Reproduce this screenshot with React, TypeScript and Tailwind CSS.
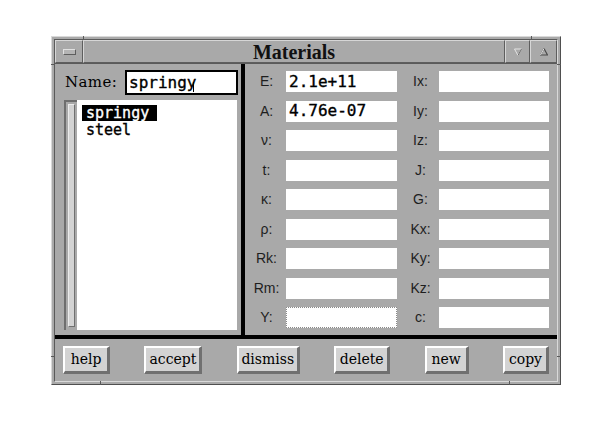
import { ReactNode } from "react";

const leftLabels = ["E:", "A:", "ν:", "t:", "κ:", "ρ:", "Rk:", "Rm:", "Y:"];
const leftValues = ["2.1e+11", "4.76e-07", "", "", "", "", "", "", ""];
const rightLabels = ["Ix:", "Iy:", "Iz:", "J:", "G:", "Kx:", "Ky:", "Kz:", "c:"];

const buttons = [
  { label: "help", w: "w-[47px]" },
  { label: "accept", w: "w-[58px]" },
  { label: "dismiss", w: "w-[63px]" },
  { label: "delete", w: "w-[56px]" },
  { label: "new", w: "w-[44px]" },
  { label: "copy", w: "w-[46px]" },
];

const mono = "font-['DejaVu_Sans_Mono',monospace] [-webkit-text-stroke:0.35px_currentColor]";
const serif = "font-['DejaVu_Serif',serif]";
const sans = "font-['Liberation_Sans',Arial,sans-serif]";

const Bevel = ({ className, children }: { className: string; children?: ReactNode }) => (
  <div
    className={`flex items-center justify-center border border-t-[#d6d6d6] border-l-[#d6d6d6] border-b-[#5e5e5e] border-r-[#5e5e5e] ${className}`}
  >
    {children}
  </div>
);

const Field = ({ value, dotted }: { value: string; dotted?: boolean }) => (
  <div
    className={`flex h-[21px] items-center bg-white pl-[3px] text-[16px] text-black ${mono} ${
      dotted ? "border border-dotted border-[#8a8a8a]" : ""
    }`}
  >
    {value}
  </div>
);

export default function App() {
  return (
    <div className="min-h-screen bg-white pl-[51px] pt-[36px]">
      {/* window frame */}
      <div className="relative h-[349px] w-[510px] border border-t-[#d9d9d9] border-l-[#d9d9d9] border-b-[#4f4f4f] border-r-[#4f4f4f] bg-[#a9a9a9] p-[2px]">
        {/* resize handle notches */}
        <div className="absolute left-[31px] top-[-1px] h-[4px] w-[1px] bg-[#5a5a5a]" />
        <div className="absolute right-[28px] top-[-1px] h-[4px] w-[1px] bg-[#5a5a5a]" />
        <div className="absolute left-[-1px] top-[27px] h-[1px] w-[4px] bg-[#5a5a5a]" />
        <div className="absolute right-[-1px] top-[27px] h-[1px] w-[4px] bg-[#5a5a5a]" />
        <div className="absolute bottom-[27px] left-[-1px] h-[1px] w-[4px] bg-[#5a5a5a]" />
        <div className="absolute bottom-[27px] right-[-1px] h-[1px] w-[4px] bg-[#5a5a5a]" />
        <div className="absolute bottom-[-1px] left-[48px] h-[4px] w-[1px] bg-[#5a5a5a]" />
        <div className="absolute bottom-[-1px] right-[50px] h-[4px] w-[1px] bg-[#5a5a5a]" />

        <div className="flex h-full flex-col border border-t-[#5a5a5a] border-l-[#5a5a5a] border-b-[#d9d9d9] border-r-[#d9d9d9]">
          {/* title bar */}
          <div className="flex h-[24px] border-b border-[#5a5a5a]">
            <Bevel className="w-[28px]">
              <div className="h-[6px] w-[13px] border border-t-[#e0e0e0] border-l-[#e0e0e0] border-b-[#5e5e5e] border-r-[#5e5e5e] bg-[#b4b4b4]" />
            </Bevel>
            <Bevel className="flex-1">
              <span className="font-['Liberation_Serif',serif] text-[20px] font-bold leading-none text-[#111]">
                Materials
              </span>
            </Bevel>
            <Bevel className="w-[25px]">
              <svg width="8" height="8" viewBox="0 0 8 8">
                <path d="M0.5 1 L7.5 1 L4 7.5 Z" fill="none" stroke="#e4e4e4" strokeWidth="1" />
                <path d="M7.5 1 L4 7.5" stroke="#6a6a6a" strokeWidth="1" />
              </svg>
            </Bevel>
            <Bevel className="w-[27px]">
              <svg width="8" height="8" viewBox="0 0 8 8">
                <path d="M4 0.5 L7.5 7 L0.5 7 Z" fill="none" stroke="#4a4a4a" strokeWidth="1.2" />
                <path d="M4 0.5 L0.5 7" stroke="#e4e4e4" strokeWidth="1" />
              </svg>
            </Bevel>
          </div>

          {/* body */}
          <div className="flex h-[271px]">
            {/* left panel */}
            <div className="flex w-[186px] flex-col pt-[6px]">
              <div className="flex h-[25px] items-center pl-[10px]">
                <div className={`w-[60px] text-[15px] tracking-[0.4px] text-black ${serif}`}>Name:</div>
                <div
                  className={`flex h-[25px] w-[113px] items-center border-2 border-black bg-white pl-[2px] text-[16px] text-black ${mono}`}
                >
                  springy
                  <span className="ml-[-3px] mt-[8px] h-[10px] w-[1px] bg-black" />
                </div>
              </div>
              <div className="ml-[9px] mt-[5px] flex h-[230px] w-[173px]">
                <div className="flex w-[13px] flex-col border-l-2 border-t-2 border-[#6e6e6e] bg-[#a9a9a9] p-[2px] pb-[3px]">
                  <div className="flex-1 border border-t-[#ececec] border-l-[#ececec] border-b-[#707070] border-r-[#707070] bg-[#d3d3d3]" />
                </div>
                <div className={`flex-1 bg-white pl-[5px] pt-[5px] text-[15px] leading-[16px] text-black ${mono}`}>
                  <div className="w-[75px] bg-black pl-[4px] text-white">springy</div>
                  <div className="mt-[1px] pl-[4px]">steel</div>
                </div>
              </div>
            </div>

            <div className="w-[4px] bg-black" />

            {/* right panel */}
            <div className="flex flex-1 flex-col gap-[8.5px] pl-[2px] pt-[7px]">
              {leftLabels.map((lbl, i) => (
                <div key={lbl} className="flex h-[21px] items-center">
                  <div className={`w-[39px] text-center text-[14px] text-[#1e1e1e] ${sans}`}>{lbl}</div>
                  <div className="w-[111px]">
                    <Field value={leftValues[i]} dotted={lbl === "Y:"} />
                  </div>
                  <div className={`ml-[5px] w-[37px] text-center text-[14px] text-[#1e1e1e] ${sans}`}>
                    {rightLabels[i]}
                  </div>
                  <div className="w-[110px]">
                    <Field value="" />
                  </div>
                </div>
              ))}
            </div>
          </div>

          <div className="h-[4px] bg-black" />

          {/* button bar */}
          <div className="flex flex-1 items-start justify-between px-[8px] pt-[7px]">
            {buttons.map((b) => (
              <button
                key={b.label}
                className={`flex h-[28px] items-center justify-center border-t-2 border-l-2 border-b-[3px] border-r-[3px] border-t-white border-l-white border-b-[#707070] border-r-[#707070] bg-[#d3d3d3] text-[14px] text-black ${serif} ${b.w}`}
              >
                {b.label}
              </button>
            ))}
          </div>
        </div>
      </div>
    </div>
  );
}
